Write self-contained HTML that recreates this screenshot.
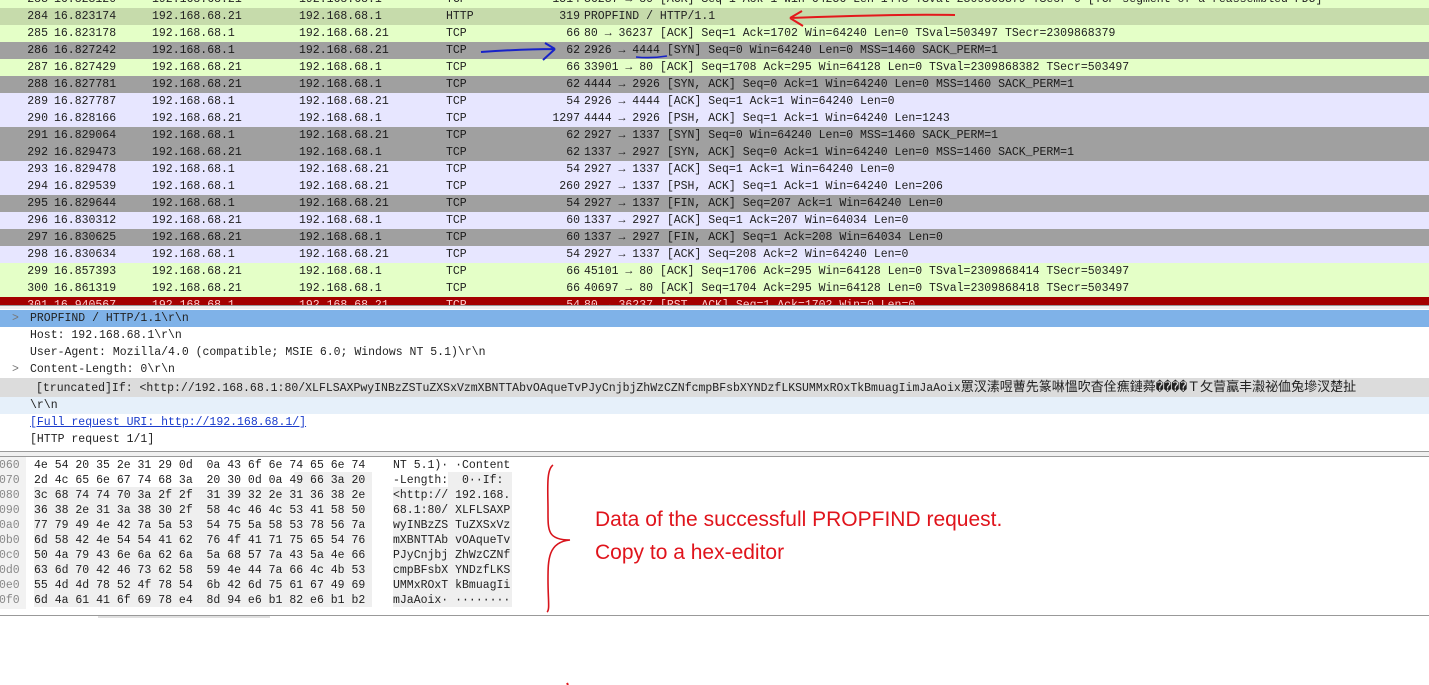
<!DOCTYPE html>
<html><head><meta charset="utf-8"><style>
body{margin:0;width:1429px;height:685px;overflow:hidden;background:#fff;position:relative;font-family:"Liberation Mono",monospace;font-size:11.5px;color:#222}
.r{position:absolute;left:0;width:1429px;height:17px;line-height:17px;white-space:pre}
.r span{position:absolute;top:0}
.g{background:#e4ffc7}.h{background:#c6dbab}.d{background:#a0a0a0;color:#1a1a1a}.l{background:#e7e6ff}.x{background:#a40000;color:#ffcccc}
.no{right:1381px;text-align:right}.t{left:54px}.s{left:152px}.ds{left:299px}.p{left:446px}.len{right:849px}.inf{left:584px}
.dl{position:absolute;left:0;width:1429px;height:17px;line-height:17px;white-space:pre}
.dl span{position:absolute;left:30px}
.hx{position:absolute;left:0;height:15px;line-height:15px;white-space:pre}
.red{position:absolute;font-family:"Liberation Sans",sans-serif;color:#e0141c;font-size:21px;left:595px}
</style></head><body>
<div class="r g" style="top:-9px"><span class="no">283</span><span class="t">16.823120</span><span class="s">192.168.68.21</span><span class="ds">192.168.68.1</span><span class="p">TCP</span><span class="len">1514</span><span class="inf">36237 → 80 [ACK] Seq=1 Ack=1 Win=64256 Len=1448 TSval=2309868379 TSecr=0 [TCP segment of a reassembled PDU]</span></div>
<div class="r h" style="top:8px"><span class="no">284</span><span class="t">16.823174</span><span class="s">192.168.68.21</span><span class="ds">192.168.68.1</span><span class="p">HTTP</span><span class="len">319</span><span class="inf">PROPFIND / HTTP/1.1</span></div>
<div class="r g" style="top:25px"><span class="no">285</span><span class="t">16.823178</span><span class="s">192.168.68.1</span><span class="ds">192.168.68.21</span><span class="p">TCP</span><span class="len">66</span><span class="inf">80 → 36237 [ACK] Seq=1 Ack=1702 Win=64240 Len=0 TSval=503497 TSecr=2309868379</span></div>
<div class="r d" style="top:42px"><span class="no">286</span><span class="t">16.827242</span><span class="s">192.168.68.1</span><span class="ds">192.168.68.21</span><span class="p">TCP</span><span class="len">62</span><span class="inf">2926 → 4444 [SYN] Seq=0 Win=64240 Len=0 MSS=1460 SACK_PERM=1</span></div>
<div class="r g" style="top:59px"><span class="no">287</span><span class="t">16.827429</span><span class="s">192.168.68.21</span><span class="ds">192.168.68.1</span><span class="p">TCP</span><span class="len">66</span><span class="inf">33901 → 80 [ACK] Seq=1708 Ack=295 Win=64128 Len=0 TSval=2309868382 TSecr=503497</span></div>
<div class="r d" style="top:76px"><span class="no">288</span><span class="t">16.827781</span><span class="s">192.168.68.21</span><span class="ds">192.168.68.1</span><span class="p">TCP</span><span class="len">62</span><span class="inf">4444 → 2926 [SYN, ACK] Seq=0 Ack=1 Win=64240 Len=0 MSS=1460 SACK_PERM=1</span></div>
<div class="r l" style="top:93px"><span class="no">289</span><span class="t">16.827787</span><span class="s">192.168.68.1</span><span class="ds">192.168.68.21</span><span class="p">TCP</span><span class="len">54</span><span class="inf">2926 → 4444 [ACK] Seq=1 Ack=1 Win=64240 Len=0</span></div>
<div class="r l" style="top:110px"><span class="no">290</span><span class="t">16.828166</span><span class="s">192.168.68.21</span><span class="ds">192.168.68.1</span><span class="p">TCP</span><span class="len">1297</span><span class="inf">4444 → 2926 [PSH, ACK] Seq=1 Ack=1 Win=64240 Len=1243</span></div>
<div class="r d" style="top:127px"><span class="no">291</span><span class="t">16.829064</span><span class="s">192.168.68.1</span><span class="ds">192.168.68.21</span><span class="p">TCP</span><span class="len">62</span><span class="inf">2927 → 1337 [SYN] Seq=0 Win=64240 Len=0 MSS=1460 SACK_PERM=1</span></div>
<div class="r d" style="top:144px"><span class="no">292</span><span class="t">16.829473</span><span class="s">192.168.68.21</span><span class="ds">192.168.68.1</span><span class="p">TCP</span><span class="len">62</span><span class="inf">1337 → 2927 [SYN, ACK] Seq=0 Ack=1 Win=64240 Len=0 MSS=1460 SACK_PERM=1</span></div>
<div class="r l" style="top:161px"><span class="no">293</span><span class="t">16.829478</span><span class="s">192.168.68.1</span><span class="ds">192.168.68.21</span><span class="p">TCP</span><span class="len">54</span><span class="inf">2927 → 1337 [ACK] Seq=1 Ack=1 Win=64240 Len=0</span></div>
<div class="r l" style="top:178px"><span class="no">294</span><span class="t">16.829539</span><span class="s">192.168.68.1</span><span class="ds">192.168.68.21</span><span class="p">TCP</span><span class="len">260</span><span class="inf">2927 → 1337 [PSH, ACK] Seq=1 Ack=1 Win=64240 Len=206</span></div>
<div class="r d" style="top:195px"><span class="no">295</span><span class="t">16.829644</span><span class="s">192.168.68.1</span><span class="ds">192.168.68.21</span><span class="p">TCP</span><span class="len">54</span><span class="inf">2927 → 1337 [FIN, ACK] Seq=207 Ack=1 Win=64240 Len=0</span></div>
<div class="r l" style="top:212px"><span class="no">296</span><span class="t">16.830312</span><span class="s">192.168.68.21</span><span class="ds">192.168.68.1</span><span class="p">TCP</span><span class="len">60</span><span class="inf">1337 → 2927 [ACK] Seq=1 Ack=207 Win=64034 Len=0</span></div>
<div class="r d" style="top:229px"><span class="no">297</span><span class="t">16.830625</span><span class="s">192.168.68.21</span><span class="ds">192.168.68.1</span><span class="p">TCP</span><span class="len">60</span><span class="inf">1337 → 2927 [FIN, ACK] Seq=1 Ack=208 Win=64034 Len=0</span></div>
<div class="r l" style="top:246px"><span class="no">298</span><span class="t">16.830634</span><span class="s">192.168.68.1</span><span class="ds">192.168.68.21</span><span class="p">TCP</span><span class="len">54</span><span class="inf">2927 → 1337 [ACK] Seq=208 Ack=2 Win=64240 Len=0</span></div>
<div class="r g" style="top:263px"><span class="no">299</span><span class="t">16.857393</span><span class="s">192.168.68.21</span><span class="ds">192.168.68.1</span><span class="p">TCP</span><span class="len">66</span><span class="inf">45101 → 80 [ACK] Seq=1706 Ack=295 Win=64128 Len=0 TSval=2309868414 TSecr=503497</span></div>
<div class="r g" style="top:280px"><span class="no">300</span><span class="t">16.861319</span><span class="s">192.168.68.21</span><span class="ds">192.168.68.1</span><span class="p">TCP</span><span class="len">66</span><span class="inf">40697 → 80 [ACK] Seq=1704 Ack=295 Win=64128 Len=0 TSval=2309868418 TSecr=503497</span></div>
<div style="position:absolute;top:297px;left:0;width:1429px;height:8px;overflow:hidden"><div class="r x" style="top:0"><span class="no">301</span><span class="t">16.940567</span><span class="s">192.168.68.1</span><span class="ds">192.168.68.21</span><span class="p">TCP</span><span class="len">54</span><span class="inf">80 → 36237 [RST, ACK] Seq=1 Ack=1702 Win=0 Len=0</span></div></div>
<div style="position:absolute;top:305px;left:0;width:1429px;height:3px;background:#f0f0f0;border-top:1px solid #999"></div>

<div class="dl" style="top:310px;background:#7fb2e8"><b style="position:absolute;left:12px;color:#777;font-weight:normal">&gt;</b><span>PROPFIND / HTTP/1.1\r\n</span></div>
<div class="dl" style="top:327px"><span>Host: 192.168.68.1\r\n</span></div>
<div class="dl" style="top:344px"><span>User-Agent: Mozilla/4.0 (compatible; MSIE 6.0; Windows NT 5.1)\r\n</span></div>
<div class="dl" style="top:361px"><b style="position:absolute;left:12px;color:#777;font-weight:normal">&gt;</b><span>Content-Length: 0\r\n</span></div>
<div class="dl" style="top:378px;height:19px;line-height:19px;background:#dcdcdc;overflow:hidden"><span style="left:36px;font-family:'Liberation Mono','Noto Sans CJK SC',monospace">[truncated]If: &lt;http://192.168.68.1:80/XLFLSAXPwyINBzZSTuZXSxVzmXBNTTAbvOAqueTvPJyCnjbjZhWzCZNfcmpBFsbXYNDzfLKSUMMxROxTkBmuagIimJaAoix<span style="position:static;font-size:13px">罳汊溸喅蓸先篆啉慍吹杳佺癄鏈蕣����Ｔ⺙萺驘丰瀫祕侐兔墋汊楚扯</span></span></div>
<div class="dl" style="top:397px;background:#e6f0fa"><span>\r\n</span></div>
<div class="dl" style="top:414px"><span style="color:#1a3ccc;text-decoration:underline">[Full request URI: http://192.168.68.1/]</span></div>
<div class="dl" style="top:431px"><span>[HTTP request 1/1]</span></div>
<div style="position:absolute;top:451px;left:0;width:1429px;height:4px;background:#f0f0f0;border-top:1px solid #999;border-bottom:1px solid #999"></div>

<div style="position:absolute;top:457px;left:0;width:26px;height:152px;background:#f2f2f2"></div>
<div style="position:absolute;top:472px;left:294px;width:78px;height:15px;background:#efefef"></div>
<div style="position:absolute;top:487px;left:34px;width:338px;height:120px;background:#efefef"></div>
<div style="position:absolute;top:472px;left:448px;width:64px;height:15px;background:#efefef"></div>
<div style="position:absolute;top:487px;left:393px;width:119px;height:120px;background:#efefef"></div>
<div style="position:absolute;top:458px;left:34px">
<div class="hx" style="top:0;left:-35px;color:#888">060</div><div class="hx" style="top:0">4e 54 20 35 2e 31 29 0d  0a 43 6f 6e 74 65 6e 74</div><div class="hx" style="top:0;left:359px">NT 5.1)· ·Content</div>
<div class="hx" style="top:15px;left:-35px;color:#888">070</div><div class="hx" style="top:15px">2d 4c 65 6e 67 74 68 3a  20 30 0d 0a 49 66 3a 20</div><div class="hx" style="top:15px;left:359px">-Length:  0··If: </div>
<div class="hx" style="top:30px;left:-35px;color:#888">080</div><div class="hx" style="top:30px">3c 68 74 74 70 3a 2f 2f  31 39 32 2e 31 36 38 2e</div><div class="hx" style="top:30px;left:359px">&lt;http:// 192.168.</div>
<div class="hx" style="top:45px;left:-35px;color:#888">090</div><div class="hx" style="top:45px">36 38 2e 31 3a 38 30 2f  58 4c 46 4c 53 41 58 50</div><div class="hx" style="top:45px;left:359px">68.1:80/ XLFLSAXP</div>
<div class="hx" style="top:60px;left:-35px;color:#888">0a0</div><div class="hx" style="top:60px">77 79 49 4e 42 7a 5a 53  54 75 5a 58 53 78 56 7a</div><div class="hx" style="top:60px;left:359px">wyINBzZS TuZXSxVz</div>
<div class="hx" style="top:75px;left:-35px;color:#888">0b0</div><div class="hx" style="top:75px">6d 58 42 4e 54 54 41 62  76 4f 41 71 75 65 54 76</div><div class="hx" style="top:75px;left:359px">mXBNTTAb vOAqueTv</div>
<div class="hx" style="top:90px;left:-35px;color:#888">0c0</div><div class="hx" style="top:90px">50 4a 79 43 6e 6a 62 6a  5a 68 57 7a 43 5a 4e 66</div><div class="hx" style="top:90px;left:359px">PJyCnjbj ZhWzCZNf</div>
<div class="hx" style="top:105px;left:-35px;color:#888">0d0</div><div class="hx" style="top:105px">63 6d 70 42 46 73 62 58  59 4e 44 7a 66 4c 4b 53</div><div class="hx" style="top:105px;left:359px">cmpBFsbX YNDzfLKS</div>
<div class="hx" style="top:120px;left:-35px;color:#888">0e0</div><div class="hx" style="top:120px">55 4d 4d 78 52 4f 78 54  6b 42 6d 75 61 67 49 69</div><div class="hx" style="top:120px;left:359px">UMMxROxT kBmuagIi</div>
<div class="hx" style="top:135px;left:-35px;color:#888">0f0</div><div class="hx" style="top:135px">6d 4a 61 41 6f 69 78 e4  8d 94 e6 b1 82 e6 b1 b2</div><div class="hx" style="top:135px;left:359px">mJaAoix· ········</div>
</div>
<div style="position:absolute;top:615px;left:0;width:1429px;height:1px;background:#999"></div>
<div style="position:absolute;top:616px;left:98px;width:172px;height:2px;background:#e0e0e0"></div>

<div class="red" style="top:508px">Data of the successfull PROPFIND request.</div>
<div class="red" style="top:541px">Copy to a hex-editor</div>

<svg style="position:absolute;left:0;top:0" width="1429" height="685">
<path d="M553 465 C546 470 548 490 548 510 C548 530 547 540 570 540 C548 542 548 560 548 580 C548 600 550 610 547 612" fill="none" stroke="#d8141c" stroke-width="1.6"/>
<path d="M955 15 C900 14 840 16 790 18 M790 18 L802 11 M790 18 L803 26" fill="none" stroke="#e3191c" stroke-width="2"/>
<path d="M481 52 C510 50 535 49 555 49 M555 49 L545 43 M555 49 L543 60" fill="none" stroke="#1722c8" stroke-width="2"/>
<path d="M636 57 C646 58 655 58 667 56" fill="none" stroke="#1722c8" stroke-width="1.6"/>
<path d="M567 683 L568 685" stroke="#e3191c" stroke-width="2"/>
</svg>
</body></html>
